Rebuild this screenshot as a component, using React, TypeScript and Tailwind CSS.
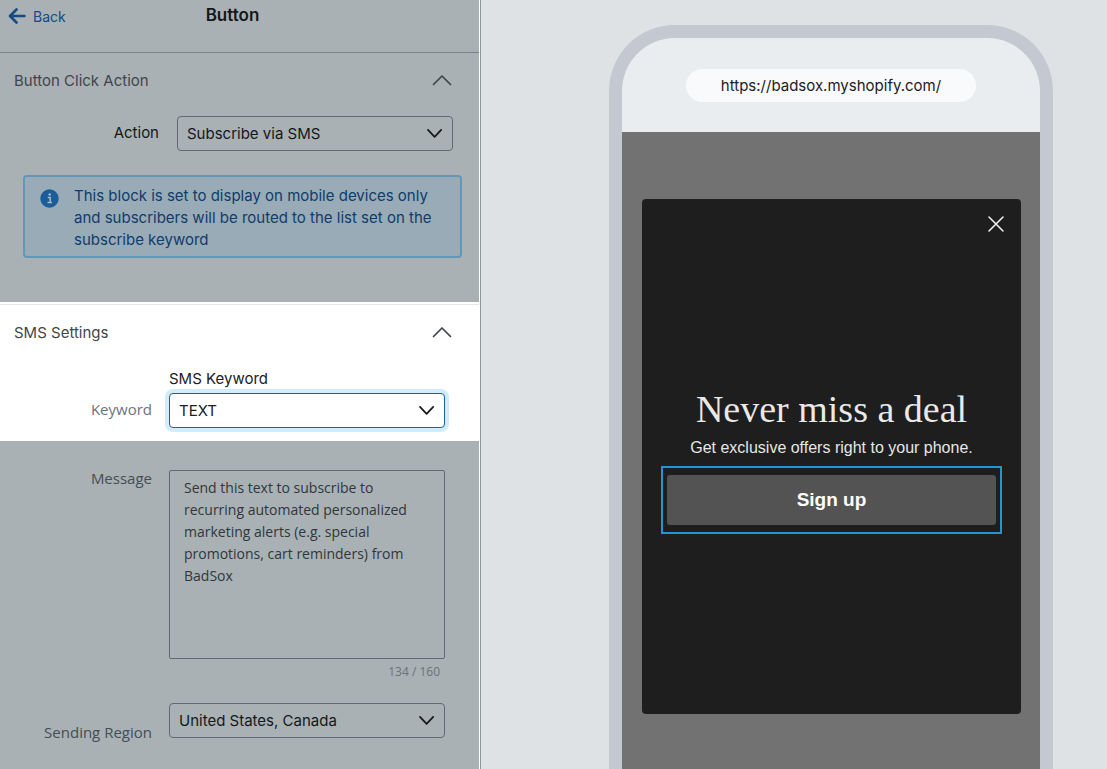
import { useState } from "react";
import type { ReactNode } from "react";

function ChevronUp() {
  return (
    <svg width="20" height="12" viewBox="0 0 20 12" fill="none" aria-hidden="true">
      <path d="M1.500 10.500 10 2l8.500 8.500" stroke="currentColor" strokeWidth="1.700" strokeLinecap="round" strokeLinejoin="round" />
    </svg>
  );
}

type SelectProps = {
  id: string;
  options: string[];
  focused?: boolean;
};

function Select({ id, options, focused = false }: SelectProps) {
  const look = focused
    ? "border-[#1762a8] bg-white text-[#1d2023] shadow-[0_0_0_4px_#d3ecfb]"
    : "border-[#636b70] bg-transparent text-[#14181b]";
  return (
    <div className="relative w-[276px]">
      <select
        id={id}
        className={`block h-[35px] w-full appearance-none rounded border pt-0.5 pr-9 pl-[9px] text-[15px] outline-none ${look}`}
      >
        {options.map((o) => (
          <option key={o}>{o}</option>
        ))}
      </select>
      <svg
        className="pointer-events-none absolute top-3 right-2.5 text-[#14181b]"
        width="16"
        height="11"
        viewBox="0 0 16 11"
        fill="none"
        aria-hidden="true"
      >
        <path d="M1 1.800 7.600 8.800l6.600-7" stroke="currentColor" strokeWidth="1.700" strokeLinecap="round" strokeLinejoin="round" />
      </svg>
    </div>
  );
}

function SectionHeader({ children }: { children: ReactNode }) {
  return (
    <button type="button" className="flex h-6 w-full items-start justify-between pr-[27px] pl-3.5 text-[15px] leading-6 text-[#3f464a]">
      <span>{children}</span>
      <span className="pt-[5px]">
        <ChevronUp />
      </span>
    </button>
  );
}

function Settings() {
  const [message, setMessage] = useState(
    "Send this text to subscribe to recurring automated personalized marketing alerts (e.g. special promotions, cart reminders) from BadSox",
  );

  return (
    <aside className="flex w-[481px] shrink-0 flex-col border-r border-[#8f969a] bg-white pr-px">
      <div className="h-[302px] bg-[#a9b1b4]">
        <header className="relative flex h-[53px] items-start border-b border-[#78858e] pt-1">
          <a href="#back" className="flex h-6 items-center gap-[7px] pl-2 text-[14px] text-[#154a85]">
            <svg width="18" height="16" viewBox="0 0 18 16" fill="none" aria-hidden="true">
              <path d="M8.500 1.500 2 8l6.500 6.500M2.500 8H16.500" stroke="currentColor" strokeWidth="2.600" strokeLinecap="round" strokeLinejoin="round" />
            </svg>
            Back
          </a>
          <h1 className="absolute inset-x-0 top-[3px] pr-3.5 text-center text-[17px] leading-6 font-semibold text-[#14181b]">Button</h1>
        </header>
        <section className="pt-4">
          <SectionHeader>Button Click Action</SectionHeader>
          <div className="mt-[23px] flex items-center gap-[18px] pl-[26px] text-[15px] text-[#14181b]">
            <label htmlFor="action" className="w-[133px] text-right">
              Action
            </label>
            <Select id="action" options={["Subscribe via SMS", "Go to URL"]} />
          </div>
          <div className="mt-6 mr-[17px] ml-[23px] flex gap-[15px] rounded border-2 border-[#6198b8] bg-[#98abb7] px-[15px] pt-2 pb-[5px] text-[#103c6b]">
            <svg className="mt-1 shrink-0" width="19" height="19" viewBox="0 0 19 19" aria-hidden="true">
              <circle cx="9.500" cy="9.500" r="9.200" fill="#1b5c99" />
              <circle cx="9.700" cy="5.500" r="1.200" fill="#a9bac5" />
              <path d="M7.700 8.400h2.500v4.800M7.500 13.400h4.400" stroke="#a9bac5" strokeWidth="1.500" fill="none" />
            </svg>
            <p className="text-[15px] leading-[22px]">
              This block is set to display on mobile devices only and subscribers will be routed to the list set on the subscribe keyword
            </p>
          </div>
        </section>
      </div>

      <section className="mt-0.5 h-[137px] border-t border-[#e3e6ea] pt-4">
        <SectionHeader>SMS Settings</SectionHeader>
        <div className="mt-[22px] grid grid-cols-[152px_276px] gap-x-[17px] text-[15px]">
          <span className="col-start-2 pb-0.5 leading-6 text-[#1d2023]">SMS Keyword</span>
          <label htmlFor="keyword" className="pt-1 text-right font-['Open_Sans',sans-serif] text-[15px] leading-6 text-[#69747f]">
            Keyword
          </label>
          <Select id="keyword" options={["TEXT", "JOIN"]} focused />
        </div>
      </section>

      <section className="flex-1 bg-[#a9b1b4] pt-[29px]">
        <div className="grid grid-cols-[152px_276px] gap-x-[17px] font-['Open_Sans',sans-serif] text-[14px] text-[#454e57]">
          <label htmlFor="message" className="-mt-1 text-right text-[15px] leading-6">
            Message
          </label>
          <textarea
            id="message"
            value={message}
            onChange={(e) => setMessage(e.target.value)}
            className="block h-[189px] resize-none rounded-xs border border-[#636b70] bg-transparent px-3.5 py-1.5 leading-[22px] text-[#30363b] outline-none"
          />
          <span className="col-start-2 pt-1 pr-[5px] text-right text-[12px] leading-[18px] text-[#6a727b]">134 / 160</span>
        </div>
        <div className="mt-[22px] grid grid-cols-[152px_276px] gap-x-[17px]">
          <label htmlFor="region" className="pt-[17px] text-right font-['Open_Sans',sans-serif] text-[15px] leading-6 text-[#454e57]">
            Sending Region
          </label>
          <Select id="region" options={["United States, Canada", "United Kingdom"]} />
        </div>
      </section>
    </aside>
  );
}

function Preview() {
  return (
    <main className="flex flex-1 flex-col items-center bg-[#dee2e5] pt-[25px] pl-[74px]">
      <div className="flex w-[444px] flex-1 flex-col overflow-hidden rounded-t-[66px] border-x-[13px] border-t-[13px] border-[#c4c8d0] bg-[#e9edf0]">
        <div className="flex h-[94px] justify-center pt-[31px]">
          <div className="flex h-[33px] w-[290px] items-center justify-center rounded-full bg-[#f9fafc] pt-0.5 text-[15px] text-[#1d2023]">
            https://badsox.myshopify.com/
          </div>
        </div>
        <div className="flex-1 bg-[#727272] pt-[67px] pr-[19px] pb-[55px] pl-5">
          <div className="relative flex h-[515px] flex-col items-stretch rounded bg-[#1e1e1e] px-[19px] pt-[190px] text-center font-['Liberation_Sans',sans-serif]">
            <button type="button" aria-label="Close" className="absolute top-4 right-4 text-[#eeeeee]">
              <svg width="18" height="18" viewBox="0 0 18 18" fill="none" aria-hidden="true">
                <path d="m2 2 14 14M16 2 2 16" stroke="currentColor" strokeWidth="1.600" strokeLinecap="round" />
              </svg>
            </button>
            <h2 className="font-['Liberation_Serif',serif] text-[38px] leading-10 text-[#e9e9e9]">Never miss a deal</h2>
            <p className="mt-[7px] text-[16px] leading-6 text-[#e6e6e6]">Get exclusive offers right to your phone.</p>
            <div className="mt-1.5 border-2 border-[#2294d8] px-1 py-[7px]">
              <button type="button" className="h-[50px] w-full rounded-[3px] bg-[#535353] text-[19px] font-bold text-white">
                Sign up
              </button>
            </div>
          </div>
        </div>
      </div>
    </main>
  );
}

export default function App() {
  return (
    <div className="flex min-h-screen font-['Inter',sans-serif]">
      <Settings />
      <Preview />
    </div>
  );
}
